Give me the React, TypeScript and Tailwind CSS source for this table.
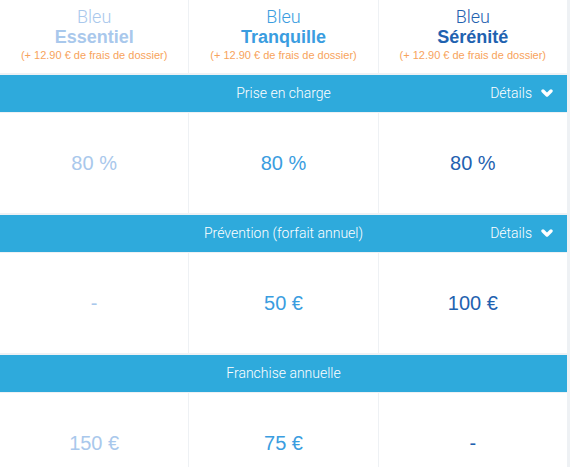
const plans = [
	{ name: "Essentiel", color: "text-[#a9c8ec]" },
	{ name: "Tranquille", color: "text-[#3a9de0]" },
	{ name: "Sérénité", color: "text-[#1f62b0]" },
];

const sections = [
	{ title: "Prise en charge", details: true, values: ["80 %", "80 %", "80 %"] },
	{ title: "Prévention (forfait annuel)", details: true, values: ["-", "50 €", "100 €"] },
	{ title: "Franchise annuelle", details: false, values: ["150 €", "75 €", "-"] },
];

function Chevron() {
	return (
		<svg width="12" height="9" viewBox="0 0 12 9" className="ml-[9px]">
			<path d="M2 2 L6 6 L10 2" fill="none" stroke="white" strokeWidth="3.4" strokeLinecap="round" strokeLinejoin="round" />
		</svg>
	);
}

export default function App() {
	return (
		<div className="h-[467px] w-[570px] overflow-hidden bg-[#eef1f4] font-['Liberation_Sans',Arial,sans-serif]">
			<div className="w-[567px] bg-[#eef1f4]">
				<div className="grid h-[73px] grid-cols-3 gap-px">
					{plans.map((p) => (
						<div className="flex flex-col items-center bg-white pt-[7px]" key={p.name}>
							<span className={`font-['Roboto'] font-light text-[18px] leading-[20px] ${p.color}`}>Bleu</span>
							<span className={`font-bold text-[18px] leading-[21px] ${p.color}`}>{p.name}</span>
							<span className="mt-[1px] text-[#f7a35c] text-[11px] leading-[13px]">
								(+ 12.90 € de frais de dossier)
							</span>
						</div>
					))}
				</div>
				{sections.map((s) => (
					<div key={s.title}>
						<div className="relative mt-[2px] flex h-[37px] items-center justify-center bg-[#2eaadc] text-[14px] text-white">
							<span className="font-['Roboto'] font-light">{s.title}</span>
							{s.details && (
								<span className="absolute right-[14px] flex items-center font-['Roboto'] font-light">
									Détails
									<Chevron />
								</span>
							)}
						</div>
						<div className="mt-px grid h-[100px] grid-cols-3 gap-px">
							{s.values.map((v, i) => (
								<div className={`flex items-center justify-center bg-white text-[20px] ${plans[i].color}`} key={i}>
									{v}
								</div>
							))}
						</div>
					</div>
				))}
			</div>
		</div>
	);
}
